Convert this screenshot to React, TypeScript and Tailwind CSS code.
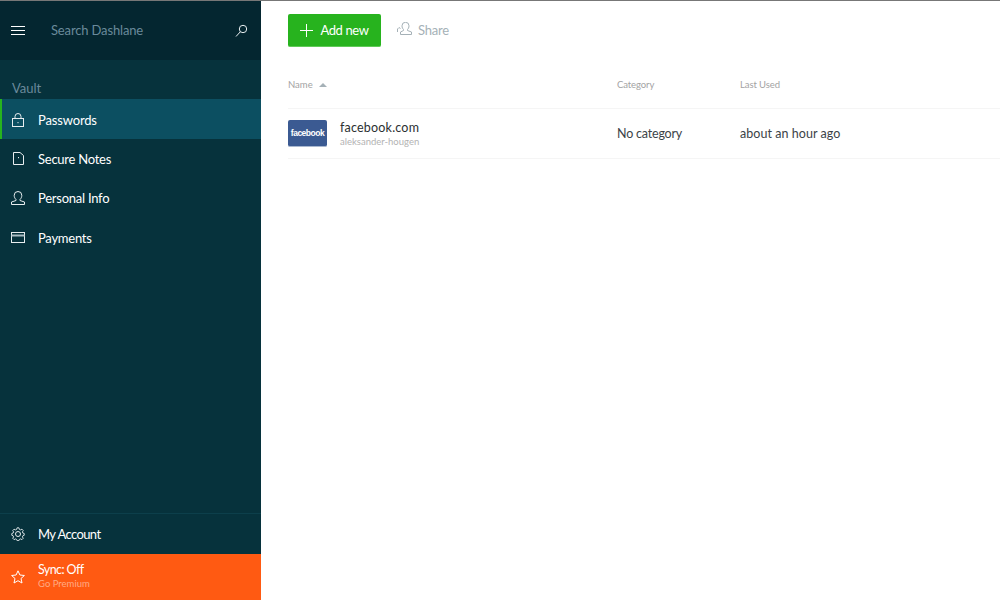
import React from "react";

function NavItem({ icon, label, active }: { icon: React.ReactNode; label: string; active?: boolean }) {
  return (
    <div className={active
      ? "h-10 flex items-center border-l-2 border-[#27b31e] bg-[#0c4f61] pl-[9px]"
      : "h-[39.5px] flex items-center pl-[11px]"}>
      <span className="w-[27px] flex items-center">{icon}</span>
      <span className={active ? "text-[13px] text-white pt-[3px] tracking-[-0.15px]" : "text-[13px] text-white pt-[1px] tracking-[-0.25px]"}>{label}</span>
    </div>
  );
}

const stroke = { fill: "none", stroke: "#e8eef0", strokeWidth: 1 } as const;

export default function App() {
  return (
    <div className="w-[1000px] h-[600px] overflow-hidden flex flex-col bg-white font-['Lato',sans-serif]">
      <div className="h-px bg-[#777777] shrink-0" />
      <div className="flex flex-1 min-h-0">
        <aside className="w-[261px] flex flex-col bg-[#06323c] shrink-0">
          <div className="h-[59px] flex items-center bg-[#042630] pl-[11px] pr-[13px]">
            <svg width="14" height="10" viewBox="0 0 14 10" className="shrink-0">
              <path d="M0 .500h14M0 4.500h14M0 8.500h14" stroke="#fff" strokeWidth="1" />
            </svg>
            <span className="ml-[26px] flex-1 text-[13px] text-[#6a8a9b] tracking-[-0.15px]">Search Dashlane</span>
            <svg width="13" height="14" viewBox="0 0 13 14">
              <circle cx="8" cy="5" r="3.700" {...stroke} />
              <path d="M5.300 7.800L1 12.500" {...stroke} />
            </svg>
          </div>
          <div className="h-[39px] flex items-end pl-[12px] pb-[1px] text-[13px] text-[#6a8a9b]">Vault</div>
          <NavItem active label="Passwords" icon={
            <svg width="12" height="14" viewBox="0 0 12 14" className="ml-[1px] mt-[2px]">
              <rect x="0.500" y="5.500" width="11" height="8" {...stroke} />
              <path d="M3 5.500V3.500a3 3 0 0 1 6 0v2" {...stroke} />
              <path d="M6 9v1.200" {...stroke} />
            </svg>} />
          <NavItem label="Secure Notes" icon={
            <svg width="11" height="13" viewBox="0 0 11 13" className="ml-[2px] -mt-[1px]">
              <path d="M.500 .500h6.500l3.500 3v9h-10z" {...stroke} />
              <path d="M5.500 5v1.200" {...stroke} />
            </svg>} />
          <NavItem label="Personal Info" icon={
            <svg width="14" height="14" viewBox="0 0 14 14">
              <path d="M5 8.500c-1-1-1.800-2.300-1.800-4.200a3.800 3.800 0 0 1 7.600 0c0 1.900-.8 3.200-1.800 4.200v1l4.500 1.500v2.500h-13v-2.500l4.500-1.500z" {...stroke} />
            </svg>} />
          <NavItem label="Payments" icon={
            <svg width="14" height="11" viewBox="0 0 14 11" className="-mt-[1px]">
              <rect x="0.500" y="0.500" width="13" height="10" {...stroke} />
              <path d="M0.500 3.500h13" stroke="#a9bcc2" strokeWidth="2" />
            </svg>} />
          <div className="flex-1" />
          <div className="h-[41px] flex items-center pl-[11px] border-t border-[#0c3f4b]">
            <span className="w-[27px] flex items-center">
              <svg width="14" height="14" viewBox="0 0 14 14">
                <path d="M7 .6l1 .1.500 1.700 1.300.6 1.600-.8 1.400 1.500-.9 1.500.5 1.300 1.500.5v2l-1.500.5-.5 1.300.9 1.500-1.400 1.500-1.600-.8-1.300.6-.5 1.300h-2l-.5-1.300-1.300-.6-1.600.8-1.400-1.500.9-1.500-.5-1.300-1.500-.5v-2l1.500-.5.5-1.300-.9-1.500 1.400-1.500 1.600.8 1.300-.6.5-1.700z" transform="translate(.7 .2) scale(.9)" {...stroke} />
                <circle cx="7" cy="7" r="2.500" {...stroke} />
              </svg>
            </span>
            <span className="text-[13px] text-white pt-[1px] tracking-[-0.6px]">My Account</span>
          </div>
          <div className="h-[46px] flex items-center bg-[#ff5a12] pl-[11px] pb-[2px]">
            <span className="w-[27px] flex items-center mt-[2px]">
              <svg width="14" height="14" viewBox="0 0 14 14">
                <path d="M7 .8l1.900 4.200 4.500.5-3.400 3 1 4.500-4-2.300-4 2.300 1-4.500-3.400-3 4.500-.5z" fill="none" stroke="#fff" strokeWidth="1" />
              </svg>
            </span>
            <div className="flex flex-col">
              <span className="text-[12.500px] leading-[15px] text-white tracking-[-0.6px]">Sync: Off</span>
              <span className="text-[9.500px] leading-[13px] text-[#ffab85]">Go Premium</span>
            </div>
          </div>
        </aside>
        <main className="flex-1 flex flex-col pl-[27px]">
          <div className="h-[59px] flex items-center">
            <button className="w-[93px] h-[33px] flex items-center justify-center gap-[7px] rounded-[2px] bg-[#27b31e] border-b border-[#5fca58] text-[13px] text-white">
              <svg width="13" height="13" viewBox="0 0 13 13"><path d="M6.500 0v13M0 6.500h13" stroke="#fff" strokeWidth="1" /></svg>
              <span className="tracking-[-0.4px] pt-[1px]">Add new</span>
            </button>
            <div className="ml-[16px] flex items-center gap-[6px] text-[13px] text-[#a5b1b7]">
              <svg width="15" height="15" viewBox="0 0 15 15" className="-mt-[2px]">
                <path d="M6.500 7.500c-.8-.8-1.500-2-1.500-3.700a3.500 3.500 0 0 1 7 0c0 1.700-.7 2.900-1.500 3.700v1l4 1.500v2.500h-11v-2.500l3-1.500z" fill="none" stroke="#a5b1b7" strokeWidth="1" />
                <path d="M.500 10V7l1.500-1.500L3.500 6.500" fill="none" stroke="#a5b1b7" strokeWidth="1" />
              </svg>
              <span className="tracking-[-0.2px]">Share</span>
            </div>
          </div>
          <div className="h-[49px] flex items-center text-[9.500px] text-[#a3a3a3] border-b border-[#f5f5f5] pt-[2px]">
            <div className="w-[329px] flex items-center gap-[6px]">
              <span>Name</span>
              <span className="w-0 h-0 border-l-4 border-r-4 border-b-4 border-l-transparent border-r-transparent border-b-[#a5b1b7]" />
            </div>
            <div className="w-[123px] tracking-[-0.1px]">Category</div>
            <div className="tracking-[-0.1px]">Last Used</div>
          </div>
          <div className="h-[50px] flex items-center border-b border-[#f5f5f5] text-[#3c4347]">
            <div className="w-[329px] flex items-center">
              <div className="w-[39px] h-[27px] -mt-[1px] pt-[1px] rounded-[2px] bg-[#3b5a92] border-b border-[#a9b8d0] flex items-center justify-center text-[8.500px] font-bold text-white tracking-[-0.5px] font-['Liberation_Sans',sans-serif]">facebook</div>
              <div className="ml-[13px] flex flex-col">
                <span className="text-[12.500px] leading-[15px] text-[#2b2f31] tracking-[0.2px]">facebook.com</span>
                <span className="text-[9.500px] leading-[12px] text-[#b3b3b3] mt-[1px]">aleksander-hougen</span>
              </div>
            </div>
            <div className="w-[123px] text-[12.500px] pt-[2px] tracking-[-0.2px]">No category</div>
            <div className="text-[12.500px] tracking-[0.05px] pt-[2px]">about an hour ago</div>
          </div>
        </main>
      </div>
    </div>
  );
}
